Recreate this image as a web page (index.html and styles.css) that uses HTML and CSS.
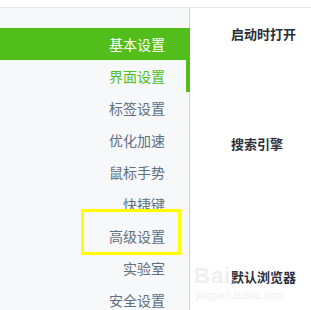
FILE: index.html
```html
<!DOCTYPE html>
<html>
<head>
<meta charset="utf-8">
<link rel="stylesheet" href="styles.css">
</head>
<body>
<div class="topbar"></div>
<div class="main">
  <nav class="sidebar">
    <div class="item active">基本设置</div>
    <div class="item current">界面设置</div>
    <div class="item">标签设置</div>
    <div class="item">优化加速</div>
    <div class="item">鼠标手势</div>
    <div class="item">快捷键</div>
    <div class="item">高级设置</div>
    <div class="item">实验室</div>
    <div class="item">安全设置</div>
  </nav>
  <section class="content">
    <h3 class="sec sec-start">启动时打开</h3>
    <h3 class="sec sec-search">搜索引擎</h3>
    <h3 class="sec sec-default">默认浏览器</h3>
  </section>
</div>
<div class="highlight"></div>
<div class="watermark">
  <div class="wm-logo">Bai</div>
  <div class="wm-url">jingyan.baidu.com</div>
</div>
</body>
</html>
```

FILE: styles.css
```css
html, body {
  margin: 0;
  padding: 0;
  background: #ffffff;
  font-family: "Noto Sans CJK SC", "Noto Sans", sans-serif;
  overflow: hidden;
  height: 310px;
}
.topbar {
  height: 7px;
  border-bottom: 1px solid #e4e6e9;
  background: #ffffff;
}
.main {
  display: flex;
  height: 302px;
}
.sidebar {
  width: 189px;
  flex: none;
  background: #f7f8fa;
  border-right: 1px solid #cdd0d4;
  padding-top: 20px;
  box-sizing: content-box;
}
.item {
  height: 32px;
  line-height: 32px;
  text-align: right;
  padding-right: 24px;
  font-size: 14px;
  color: #5f6f80;
}
.item.active {
  background: #52be1c;
  color: #ffffff;
  margin-right: -1px;
  padding-right: 25px;
}
.item.current {
  color: #52be1c;
  border-right: 4px solid #52be1c;
  margin-right: -1px;
  padding-right: 21px;
}
.content {
  flex: 1;
  padding-left: 41px;
  position: relative;
  z-index: 1;
}
.sec {
  margin: 0;
  font-size: 13px;
  font-weight: bold;
  color: #2b2f3a;
  line-height: 20px;
}
.sec-start { margin-top: 16px; }
.sec-search { margin-top: 90px; }
.sec-default { margin-top: 113px; }
.highlight {
  position: absolute;
  left: 81px;
  top: 209px;
  width: 94px;
  height: 40px;
  border: 3px solid #ffff00;
}
.watermark {
  position: absolute;
  left: 194px;
  top: 264px;
  color: #efefef;
  font-family: "Liberation Sans", Arial, sans-serif;
  pointer-events: none;
}
.wm-logo {
  font-size: 22px;
  font-weight: bold;
  line-height: 24px;
  letter-spacing: 1px;
}
.wm-url {
  font-size: 11px;
  line-height: 12px;
  margin-top: 1px;
  margin-left: 2px;
}
```
